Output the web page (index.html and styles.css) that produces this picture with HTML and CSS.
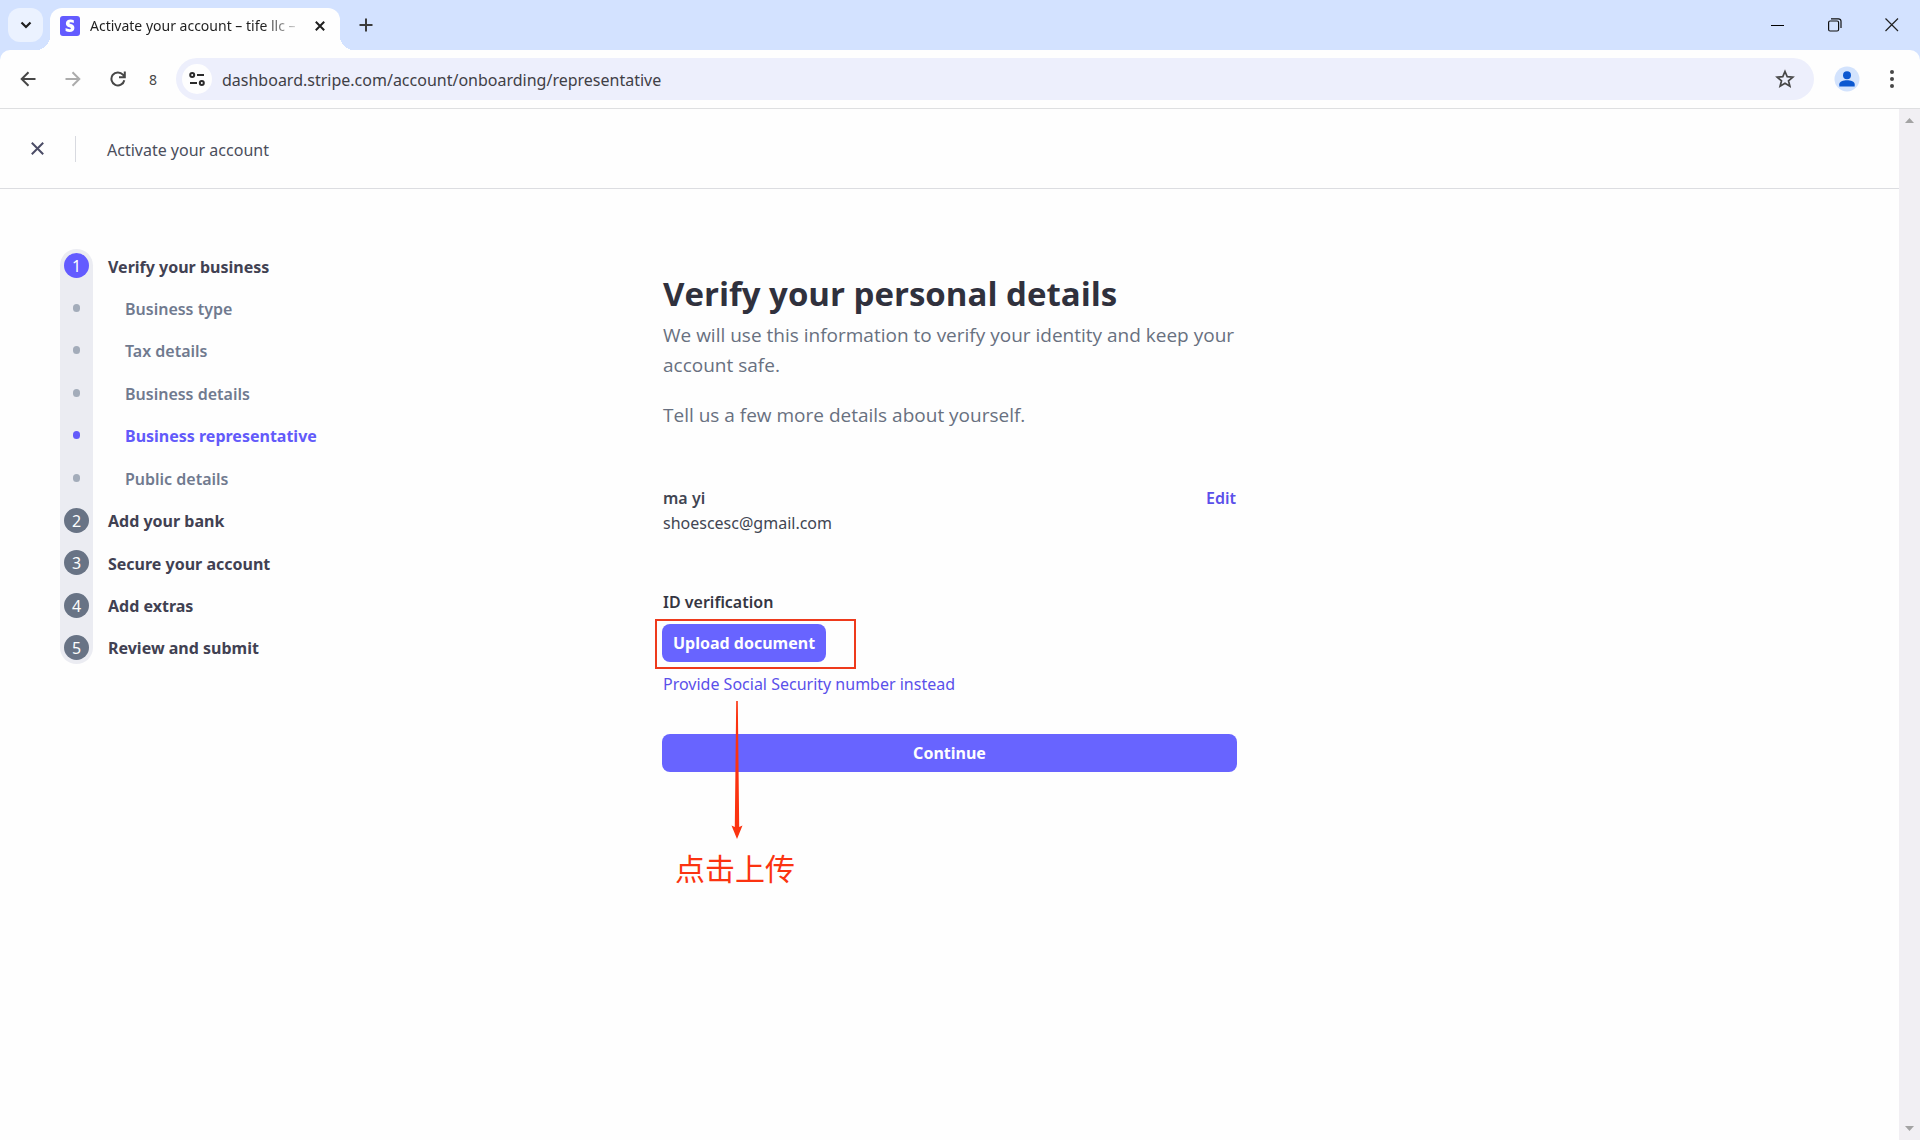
FILE: index.html
```html
<!DOCTYPE html>
<html lang="en">
<head>
<meta charset="utf-8">
<meta name="viewport" content="width=device-width, initial-scale=1">
<title>Activate your account – tife llc</title>
<link rel="stylesheet" href="styles.css">
</head>
<body>
<div class="browser">
  <div class="tabstrip">
    <button class="tab-search" aria-label="Search tabs">
      <svg width="12" height="8" viewBox="0 0 12 8"><path d="M1.5 1.5 6 6l4.500-4.500" fill="none" stroke="#1f1f1f" stroke-width="2.200"/></svg>
    </button>
    <div class="tab">
      <svg class="favicon" width="20" height="20" viewBox="0 0 20 20"><rect width="20" height="20" rx="3" fill="#635bff"/><path d="M13.800 4.200v2.900c-1-.5-2.200-.8-3.200-.8-.8 0-1.200.2-1.200.7 0 1.300 5 .7 5 5 0 2.700-2 4-4.800 4-1.300 0-2.800-.3-4-.9v-3c1.200.7 2.800 1.200 4 1.200.8 0 1.300-.2 1.300-.8 0-1.400-5-.8-5-4.900 0-2.600 1.900-4.100 4.700-4.100 1.100 0 2.200.2 3.200.7z" fill="#fff"/></svg>
      <span class="tab-title">Activate your account – tife llc –</span>
      <button class="tab-close" aria-label="Close tab">
        <svg width="10" height="10" viewBox="0 0 10 10"><path d="m.8.8 8.400 8.400M9.200.8.800 9.200" stroke="#1f1f1f" stroke-width="2"/></svg>
      </button>
    </div>
    <button class="new-tab" aria-label="New tab">
      <svg width="14" height="14" viewBox="0 0 14 14"><path d="M7 .5v13M.5 7h13" stroke="#3c3c3c" stroke-width="2"/></svg>
    </button>
    <div class="window-controls">
      <button aria-label="Minimize"><svg width="14" height="14" viewBox="0 0 14 14"><path d="M0 7.500h13" stroke="#000"/></svg></button>
      <button aria-label="Restore"><svg width="14" height="14" viewBox="0 0 14 14" fill="none" stroke="#111" stroke-width="1.200"><rect x=".6" y="3" width="10" height="10" rx="1.500"/><path d="M3 .8h7.500a2.500 2.500 0 0 1 2.500 2.500V10"/></svg></button>
      <button aria-label="Close"><svg width="14" height="14" viewBox="0 0 14 14"><path d="m.5.5 12.500 12.500M13 .5.500 13" stroke="#222" stroke-width="1.200"/></svg></button>
    </div>
  </div>

  <div class="toolbar">
    <button class="tool" aria-label="Back"><svg width="16" height="16" viewBox="0 0 16 16" fill="none" stroke="#474747" stroke-width="2"><path d="M15.500 8H2M8.500 1.200 1.700 8l6.800 6.800"/></svg></button>
    <button class="tool" aria-label="Forward"><svg width="16" height="16" viewBox="0 0 16 16" fill="none" stroke="#acacac" stroke-width="2"><path d="M.5 8H14M7.500 1.200 14.300 8l-6.800 6.800"/></svg></button>
    <button class="tool" aria-label="Reload"><svg width="16" height="16" viewBox="0 0 16 16" fill="none" stroke="#474747" stroke-width="2"><path d="M14.300 9.200A6.500 6.500 0 1 1 12.900 3.700l1.400 1.600M14.800.5v5.800H9"/></svg></button>
    <span class="tool-label">8</span>
    <div class="omnibox">
      <button class="site-info" aria-label="View site information">
        <svg width="16" height="14" viewBox="0 0 16 14" fill="none" stroke="#2b2b2b" stroke-width="2"><circle cx="3.200" cy="3" r="2"/><path d="M8 3h7M1 11h7"/><circle cx="12.800" cy="11" r="2"/></svg>
      </button>
      <input class="url" type="text" aria-label="Address" value="dashboard.stripe.com/account/onboarding/representative">
      <button class="bookmark" aria-label="Bookmark this tab">
        <svg width="20" height="20" viewBox="0 0 20 20"><path d="m10 2.500 2.200 5.200 5.600.4-4.300 3.700 1.400 5.500L10 14.300l-4.900 3 1.400-5.500L2.200 8.100l5.600-.4z" fill="none" stroke="#474747" stroke-width="1.700"/></svg>
      </button>
    </div>
    <button class="profile" aria-label="Profile">
      <svg width="26" height="26" viewBox="0 0 26 26"><circle cx="13" cy="13" r="12.500" fill="#d3e3fd"/><circle cx="13" cy="9.200" r="4" fill="#0b57d0"/><path d="M5.300 20.500v-2.300c0-2.900 4-4 7.700-4s7.700 1.100 7.700 4v2.300z" fill="#0b57d0"/></svg>
    </button>
    <button class="menu" aria-label="Menu">
      <svg width="4" height="18" viewBox="0 0 4 18" fill="#474747"><circle cx="2" cy="2" r="2"/><circle cx="2" cy="9" r="2"/><circle cx="2" cy="16" r="2"/></svg>
    </button>
  </div>

  <div class="viewport">
    <div class="page">
      <header class="page-header">
        <button class="exit" aria-label="Close"><svg width="13" height="13" viewBox="0 0 13 13"><path d="m.8.8 11.400 11.400M12.200.8.800 12.200" stroke="#4b4c66" stroke-width="2"/></svg></button>
        <span class="page-title">Activate your account</span>
      </header>
      <div class="content">
        <nav aria-label="Onboarding steps">
          <ol class="steps">
            <li class="step active"><span class="marker">1</span><span class="label">Verify your business</span></li>
            <li class="substep"><span class="marker"></span><span class="label">Business type</span></li>
            <li class="substep"><span class="marker"></span><span class="label">Tax details</span></li>
            <li class="substep"><span class="marker"></span><span class="label">Business details</span></li>
            <li class="substep current"><span class="marker"></span><span class="label">Business representative</span></li>
            <li class="substep"><span class="marker"></span><span class="label">Public details</span></li>
            <li class="step"><span class="marker">2</span><span class="label">Add your bank</span></li>
            <li class="step"><span class="marker">3</span><span class="label">Secure your account</span></li>
            <li class="step"><span class="marker">4</span><span class="label">Add extras</span></li>
            <li class="step"><span class="marker">5</span><span class="label">Review and submit</span></li>
          </ol>
        </nav>
        <main class="form">
          <h1>Verify your personal details</h1>
          <p>We will use this information to verify your identity and keep your account safe.</p>
          <p>Tell us a few more details about yourself.</p>
          <section class="person">
            <div>
              <div class="name">ma yi</div>
              <div class="email">shoescesc@gmail.com</div>
            </div>
            <a class="edit" href="#edit">Edit</a>
          </section>
          <section class="verification">
            <h2>ID verification</h2>
            <div class="upload">
              <button class="primary">Upload document</button>
              <div class="highlight"></div>
              <div class="note">
                <svg width="12" height="138" viewBox="0 0 12 138"><path d="M5.200 0h1.600L8.200 126l3.300-1.500L6 138 .5 124.500l3.300 1.500z" fill="#fb3310"/></svg>
                <span lang="zh">点击上传</span>
              </div>
            </div>
            <a class="alternative" href="#ssn">Provide Social Security number instead</a>
          </section>
          <button class="primary wide">Continue</button>
        </main>
      </div>
    </div>
    <div class="scrollbar">
      <svg width="9" height="5" viewBox="0 0 9 5"><path d="M0 5 4.500 0 9 5z" fill="#a3a3a3"/></svg>
      <svg width="9" height="5" viewBox="0 0 9 5"><path d="M0 0h9L4.500 5z" fill="#a3a3a3"/></svg>
    </div>
  </div>
</div>
</body>
</html>
```

FILE: styles.css
```css
* {
  box-sizing: border-box;
}

body {
  margin: 0;
  background: #fefefe;
  color: #414552;
  font-family: "Noto Sans", "Noto Sans CJK SC", sans-serif;
  font-size: 16px;
}

button {
  display: flex;
  align-items: center;
  justify-content: center;
  margin: 0;
  padding: 0;
  border: 0;
  background: none;
  font: inherit;
}

a {
  color: #5a50ea;
  text-decoration: none;
}

svg {
  display: block;
}

.browser {
  display: flex;
  flex-direction: column;
  min-height: 100vh;
  background: #d3e2ff;
}

/* Tab strip */
.tabstrip {
  display: flex;
  align-items: center;
  height: 50px;
}

.tab-search {
  width: 35px;
  height: 34px;
  margin-left: 8px;
  border-radius: 12px;
  background: #ebf2ff;
}

.tab {
  position: relative;
  display: flex;
  align-items: center;
  align-self: flex-end;
  justify-content: space-between;
  width: 290px;
  height: 42px;
  margin-left: 7px;
  padding: 0 15px 6px 10px;
  border-radius: 12px 12px 0 0;
  background: #fefefe;
}

.tab::before,
.tab::after {
  content: "";
  position: absolute;
  bottom: 0;
  width: 14px;
  height: 14px;
}

.tab::before {
  right: 100%;
  background: radial-gradient(circle at 0 0, transparent 14px, #fefefe 14px);
}

.tab::after {
  left: 100%;
  background: radial-gradient(circle at 100% 0, transparent 14px, #fefefe 14px);
}

.favicon {
  flex: none;
}

.tab-title {
  margin: 0 auto 0 10px;
  white-space: nowrap;
  font-size: 14px;
  line-height: 24px;
  color: transparent;
  background: linear-gradient(90deg, #1f1f1f 84%, #1f1f1f33);
  background-clip: text;
}

.new-tab {
  margin-left: 19px;
}

.window-controls {
  display: flex;
  gap: 43px;
  margin-left: auto;
  padding-right: 21px;
}

/* Toolbar */
.toolbar {
  display: flex;
  align-items: center;
  height: 59px;
  border-bottom: 1px solid #dedfe1;
  border-radius: 10px 10px 0 0;
  background: #fefefe;
  padding: 0 26px 0 19px;
}

.tool {
  width: 18px;
  margin-right: 27px;
}

.tool-label {
  width: 8px;
  margin: 0 19px 0 -5px;
  color: #474747;
  font-size: 14px;
}

.omnibox {
  display: flex;
  flex: 1;
  align-items: center;
  height: 42px;
  padding: 0 19px 0 6px;
  border-radius: 21px;
  background: #edeffc;
}

.site-info {
  width: 30px;
  height: 30px;
  border-radius: 50%;
  background: #fefefe;
}

.url {
  flex: 1;
  min-width: 0;
  margin-left: 10px;
  padding: 2px 0 0;
  border: 0;
  background: none;
  color: #3f4046;
  font: inherit;
}

.profile {
  margin-left: 20px;
}

.menu {
  margin-left: 30px;
}

/* Page */
.viewport {
  display: flex;
  flex: 1;
}

.page {
  flex: 1;
  background: #fefefe;
}

.scrollbar {
  display: flex;
  flex-direction: column;
  align-items: center;
  justify-content: space-between;
  width: 21px;
  padding: 9px 0;
  background: #f1eff3;
}

.page-header {
  display: flex;
  align-items: center;
  height: 80px;
  padding-left: 31px;
  border-bottom: 1px solid #dcdde1;
}

.page-title {
  margin-left: 31px;
  padding: 2px 0 0 31px;
  border-left: 1px solid #d8dae0;
  color: #4b4e5c;
  line-height: 24px;
}

.content {
  display: grid;
  grid-template-columns: 1fr 575px 1fr;
}

.steps {
  position: relative;
  display: flex;
  flex-direction: column;
  justify-content: space-between;
  height: 415px;
  margin: 60px 0 0 60px;
  padding: 0;
  list-style: none;
}

.steps::before {
  content: "";
  position: absolute;
  top: 0;
  bottom: 0;
  left: 0;
  width: 33px;
  border-radius: 17px;
  background: #ebecf2;
}

.step,
.substep {
  position: relative;
  display: flex;
  align-items: center;
  height: 33px;
}

.step {
  gap: 19px;
  color: #414152;
  font-weight: 700;
}

.substep {
  gap: 45px;
  color: #707a8f;
  font-weight: 600;
}

.label {
  padding-top: 2px;
}

.step .marker {
  width: 25px;
  height: 25px;
  margin-left: 4px;
  border-radius: 50%;
  background: #687385;
  color: #fefefe;
  font-weight: 400;
  line-height: 26px;
  text-align: center;
}

.step.active .marker {
  background: #635bff;
}

.substep .marker {
  width: 7px;
  height: 8px;
  margin-left: 13px;
  border-radius: 4px;
  background: #a3acba;
}

.substep.current {
  color: #625afa;
  font-weight: 700;
}

.substep.current .marker {
  background: #625afa;
}

.form {
  padding-top: 82px;
}

h1 {
  margin: 0 1px 3px;
  color: #30313d;
  font-family: "Open Sans", sans-serif;
  font-size: 33px;
  line-height: 46px;
}

.form p {
  margin: 0 1px 20px;
  color: #687080;
  font-family: "Open Sans", sans-serif;
  font-size: 19px;
  line-height: 30px;
}

.person {
  display: flex;
  justify-content: space-between;
  margin: 56px 1px 0;
  line-height: 25px;
}

.name,
.edit {
  font-weight: 600;
}

.verification {
  margin-top: 54px;
}

h2 {
  margin: 0 1px 9px;
  color: #353642;
  font-size: 16px;
  font-weight: 600;
  line-height: 25px;
}

.upload {
  position: relative;
}

.primary {
  height: 38px;
  padding: 0 11px;
  border-radius: 8px;
  background: #6864ff;
  color: #fefefe;
  font-weight: 700;
}

.wide {
  width: 100%;
  margin-top: 37px;
}

.highlight {
  position: absolute;
  top: -5px;
  left: -7px;
  width: 201px;
  height: 50px;
  border: 2px solid #ee3a1c;
}

.note {
  position: absolute;
  top: 77px;
  left: 13px;
  display: flex;
  flex-direction: column;
  align-items: center;
  gap: 8px;
  color: #fb3310;
  font-size: 30px;
  line-height: 44px;
}

.note svg {
  margin-left: 4px;
}

.alternative {
  display: block;
  margin: 10px 1px 0;
  line-height: 25px;
}
```
